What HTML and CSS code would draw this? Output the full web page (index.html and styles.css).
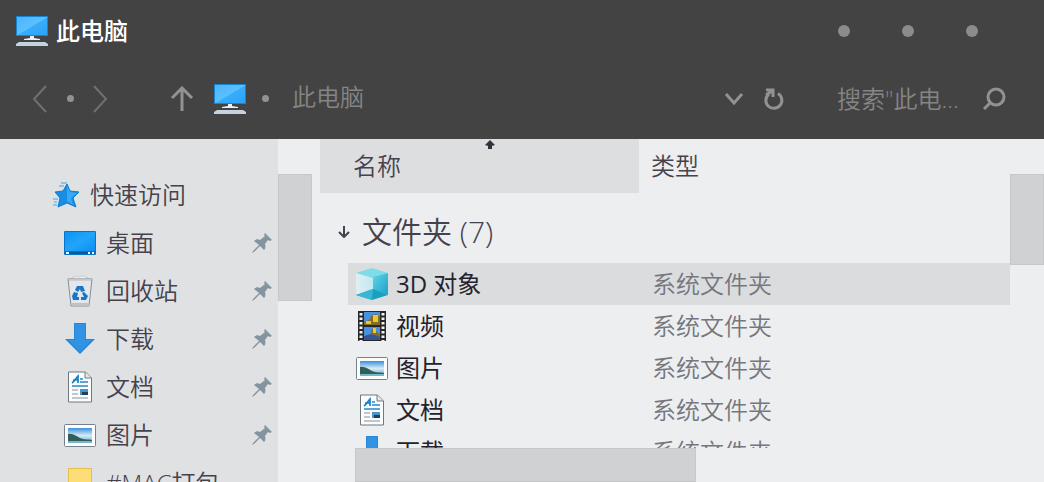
FILE: index.html
```html
<!DOCTYPE html>
<html lang="zh-CN">
<head>
<meta charset="utf-8">
<meta name="viewport" content="width=device-width, initial-scale=1">
<title>此电脑</title>
<link rel="stylesheet" href="styles.css">
</head>
<body>
<svg class="defs" aria-hidden="true">
  <defs>
    <linearGradient id="screen" x1="0" y1="0" x2="1" y2="1"><stop offset="0" stop-color="#4db4fa"/><stop offset=".5" stop-color="#5bc0ff"/><stop offset=".52" stop-color="#38adfb"/><stop offset="1" stop-color="#2ba3f8"/></linearGradient>
    <linearGradient id="desk" x1="0" y1="0" x2="1" y2="1"><stop offset="0" stop-color="#0b94f3"/><stop offset=".5" stop-color="#22a4fa"/><stop offset="1" stop-color="#0c8ff0"/></linearGradient>
    <linearGradient id="sky" x1="0" y1="0" x2="0" y2="1"><stop offset="0" stop-color="#3d8fdc"/><stop offset=".5" stop-color="#d5ecf6"/><stop offset="1" stop-color="#5aa7cf"/></linearGradient>
    <linearGradient id="glass" x1="0" y1="0" x2="1" y2="0"><stop offset="0" stop-color="#e2eef0"/><stop offset="1" stop-color="#bfe9f1"/></linearGradient>
    <linearGradient id="side" x1="0" y1="0" x2="1" y2="1"><stop offset="0" stop-color="#62d3e8"/><stop offset="1" stop-color="#1ba2c8"/></linearGradient>
    <symbol id="monitor" viewBox="0 0 32 32"><path d="M0 1h32v20H0z" fill="#1684d1"/><path d="M1 2h30v18H1z" fill="url(#screen)"/><path d="M14 21h4v2l6 1v1H8v-1l6-1z" fill="#e7f1f7"/><path d="M3 27h26l3 2v2H0v-2z" fill="#c4d3df"/></symbol>
    <symbol id="star" viewBox="0 0 28 28"><path d="M9 2h6M7 5h5M1 18h5M2 21h3M1 24h4" stroke="#70bcec" stroke-width="1.5"/><path d="M15 3l3 7 9 1-6 6 3 9-9-4-9 4 2-9-5-6 8-1z" fill="#178ee6" stroke="#1379cb"/><path d="M15 5l3 6 7 1-6 5 2 7-6-4z" fill="#39a8f5"/></symbol>
    <symbol id="desktop" viewBox="0 0 32 32"><rect y="4" width="32" height="24" rx="1" fill="#0874c7"/><path d="M1 5h30v19H1z" fill="url(#desk)"/><path d="M1 25h30v2H1z" fill="#075b9e"/><path d="M2 25h3v2H2zM24 25h2v2h-2zM28 25h2v2h-2z" fill="#fff"/></symbol>
    <symbol id="bin" viewBox="0 0 32 32"><path d="M8 3l4-2 3 1 4-1 5 2v3H7z" fill="#f3f5f6" stroke="#c5cbd0"/><path d="M4 4h24l-3 27H7z" fill="#e3e6ea" stroke="#8b8f94"/><path d="M7 28h18v3H8z" fill="#bfc3c7"/><path d="M4 4h24v1H4z" fill="#f7f8f9" stroke="#a3a7ab" stroke-width=".7"/><path d="M13 11h6l2 5-4 1-1-3-2 3-3-2zM10 17l4 1-1 4h2v3h-6l-1-4zM20 17l4 4-2 4h-5v-3h3l-2-4z" fill="#1676c9"/></symbol>
    <symbol id="download" viewBox="0 0 32 32"><path d="M10 0h12v16h9L16 31 1 16h9z" fill="#2587d8"/><path d="M11 1h10v16h7L16 29 4 17h7z" fill="#3093e4"/></symbol>
    <symbol id="document" viewBox="0 0 32 32"><path d="M4.500 1h17l6 6v24h-23z" fill="#fbfcfd" stroke="#6f7880"/><path d="M21 1v6h6" fill="#e5e8ea" stroke="#6f7880"/><path d="M8 12c2-1 4-5 6-7v7M9 9h5" fill="none" stroke="#147fc4" stroke-width="1.700"/><path d="M16 8h3M16 11h8M8 15h16" stroke="#2789ca" stroke-width="1.500"/><path d="M8 19h6M8 23h6M8 27h16" stroke="#859099" stroke-width="1.200"/><path d="M16 18h8v6h-8z" fill="#4d93bd"/><path d="M18 21h6v3h-6z" fill="#203f60"/></symbol>
    <symbol id="picture" viewBox="0 0 32 32"><rect x=".5" y="5.500" width="31" height="22" rx="1" fill="#fbfcfd" stroke="#78818a"/><path d="M4 9h24v15H4z" fill="url(#sky)"/><path d="M4 15c5-1 8 2 12 4s8 1 12 2v1H4z" fill="#315f58"/><path d="M4 22h24v2H4z" fill="#75b5d0"/></symbol>
    <symbol id="folder" viewBox="0 0 32 32"><path d="M4 1h24v31H4z" fill="#e6bd52"/><path d="M5 2h22v30H5z" fill="#fddd76"/></symbol>
    <symbol id="cube" viewBox="0 0 32 32"><path d="M0 5l17 4v13L0 27z" fill="url(#glass)"/><path d="M0 5L16 0l16 5-15 5z" fill="#7edbe8"/><path d="M17 9l15-4v22l-15-5z" fill="url(#side)"/><path d="M0 27l17-6 15 6-16 5z" fill="#189fc2"/><path d="M0 27l17-6-1 11z" fill="#38b6d3"/></symbol>
    <symbol id="film" viewBox="0 0 32 32"><path d="M2 1h28v30H2z" fill="#272727"/><path d="M8 2h16v13H8zM8 17h16v13H8z" fill="#4a91dd"/><path d="M8 12l5-2 3-5 4-1 4 3v8H8zM8 28l6-3 2-6 4 2 4 4v5H8z" fill="#806d2b"/><path d="M10 11h5v3h-5zM17 5h5v7h-5zM17 18h3v5h-3z" fill="#f0c52f"/><path d="M8 26l7-2 9 3v3H8z" fill="#355494"/><path d="M5 3v28M27 3v28" stroke="#f2f2f2" stroke-width="3" stroke-dasharray="2.500 2"/></symbol>
    <symbol id="pin" viewBox="0 0 20 20"><path d="M13 0l7 7-2 1-2-1-3 4c1 3 0 5-1 6l-4-4-6 6-2 1 1-2 6-6-5-4c2-2 4-2 6-1l5-4-1-1z" fill="#8495a0"/></symbol>
  </defs>
</svg>
<div class="window">
  <header class="chrome">
    <div class="titlebar">
      <svg class="icon"><use href="#monitor"/></svg>
      <h1 class="title">此电脑</h1>
      <div class="controls">
        <button class="dot" aria-label="最小化"></button>
        <button class="dot" aria-label="最大化"></button>
        <button class="dot" aria-label="关闭"></button>
      </div>
    </div>
    <nav class="toolbar" aria-label="导航">
      <div class="history">
        <button class="tool" aria-label="后退"><svg width="16" height="30" viewBox="0 0 16 30"><path d="M14 2L2 15l12 13" class="dim"/></svg></button>
        <span class="bullet"></span>
        <button class="tool" aria-label="前进"><svg width="16" height="30" viewBox="0 0 16 30"><path d="M2 2l12 13L2 28" class="dim"/></svg></button>
      </div>
      <button class="tool" aria-label="向上"><svg width="24" height="26" viewBox="0 0 24 26"><path d="M12 25V2M2 12L12 2l10 10" class="line"/></svg></button>
      <div class="address">
        <svg class="icon"><use href="#monitor"/></svg>
        <span class="bullet"></span>
        <span class="path">此电脑</span>
      </div>
      <div class="actions">
        <button class="tool" aria-label="展开"><svg width="20" height="14" viewBox="0 0 20 14"><path d="M2 2l8 9 8-9" class="line"/></svg></button>
        <button class="tool" aria-label="刷新"><svg width="20" height="24" viewBox="0 0 20 24"><path d="M14 6.500A8 8 0 1 1 5 7" class="line"/><path d="M2 3h7v7M8 4L2 8" class="line"/></svg></button>
      </div>
      <div class="search">
        <input class="query" type="text" aria-label="搜索" placeholder="搜索&quot;此电...">
        <button class="tool" aria-label="开始搜索"><svg width="24" height="24" viewBox="0 0 24 24"><circle cx="14" cy="10" r="8" class="line"/><path d="M8 16l-6 6" class="line"/></svg></button>
      </div>
    </nav>
  </header>
  <div class="content">
    <nav class="sidebar" aria-label="快速访问">
      <a class="quick" href="#"><svg class="star"><use href="#star"/></svg>快速访问</a>
      <a class="place" href="#"><svg class="icon"><use href="#desktop"/></svg><span class="label">桌面</span><svg class="pin"><use href="#pin"/></svg></a>
      <a class="place" href="#"><svg class="icon"><use href="#bin"/></svg><span class="label">回收站</span><svg class="pin"><use href="#pin"/></svg></a>
      <a class="place" href="#"><svg class="icon"><use href="#download"/></svg><span class="label">下载</span><svg class="pin"><use href="#pin"/></svg></a>
      <a class="place" href="#"><svg class="icon"><use href="#document"/></svg><span class="label">文档</span><svg class="pin"><use href="#pin"/></svg></a>
      <a class="place" href="#"><svg class="icon"><use href="#picture"/></svg><span class="label">图片</span><svg class="pin"><use href="#pin"/></svg></a>
      <a class="place" href="#"><svg class="icon"><use href="#folder"/></svg><span class="label">#MAC打包</span></a>
    </nav>
    <div class="side-track"><div class="thumb side-thumb"></div></div>
    <main class="files">
      <div class="columns">
        <button class="column sorted">名称<svg class="sort" viewBox="0 0 10 10"><path d="M5 0l5 5-3 1v3H3V6L0 5z"/></svg></button>
        <button class="column">类型</button>
      </div>
      <h2 class="group"><svg class="arrow" viewBox="0 0 12 12"><path d="M6 0v10M1 6l5 5 5-5"/></svg>文件夹 (7)</h2>
      <div class="listing">
        <table class="table">
          <colgroup><col class="name-col"><col></colgroup>
          <tbody>
            <tr class="selected"><td><div class="name"><svg class="icon"><use href="#cube"/></svg>3D 对象</div></td><td class="type">系统文件夹</td></tr>
            <tr><td><div class="name"><svg class="icon"><use href="#film"/></svg>视频</div></td><td class="type">系统文件夹</td></tr>
            <tr><td><div class="name"><svg class="icon"><use href="#picture"/></svg>图片</div></td><td class="type">系统文件夹</td></tr>
            <tr><td><div class="name"><svg class="icon"><use href="#document"/></svg>文档</div></td><td class="type">系统文件夹</td></tr>
            <tr><td><div class="name"><svg class="icon"><use href="#download"/></svg>下载</div></td><td class="type">系统文件夹</td></tr>
          </tbody>
        </table>
      </div>
      <div class="bottom-track"><div class="thumb bottom-thumb"></div></div>
    </main>
    <div class="main-track"><div class="thumb main-thumb"></div></div>
  </div>
</div>
</body>
</html>
```

FILE: styles.css
```css
* { box-sizing: border-box; }

body {
  margin: 0;
  font: 350 24px/32px "Open Sans", "Noto Sans CJK SC", sans-serif;
  color: #45424d;
}

button, input { font: inherit; color: inherit; border: 0; padding: 0; background: none; }
a { color: inherit; text-decoration: none; }
svg { display: block; flex: none; }
.defs { position: absolute; width: 0; height: 0; }
.icon { width: 32px; height: 32px; }

.window { display: flex; flex-direction: column; height: 100vh; overflow: hidden; background: #edeeef; }

.chrome { flex: none; background: #434344; }
.titlebar { display: flex; align-items: center; gap: 8px; height: 62px; padding: 0 66px 0 16px; }
.title { margin: 0; flex: 1; font-size: 24px; font-weight: 500; color: #fff; }
.controls { display: flex; gap: 52px; }
.dot { width: 12px; height: 12px; border-radius: 50%; background: #8c8c8b; }

.toolbar { display: flex; align-items: center; height: 77px; padding: 0 38px 4px 32px; color: #858585; }
.history { display: flex; align-items: center; justify-content: space-between; width: 76px; margin-right: 62px; }
.tool { display: flex; }
.bullet { width: 7px; height: 7px; border-radius: 50%; background: #929292; }
.dim, .line { fill: none; stroke: #707070; stroke-width: 2; }
.line { stroke: #929292; stroke-width: 3; }
.address { display: flex; flex: 1; align-items: center; gap: 16px; margin-left: 20px; }
.path { padding: 0 0 4px 7px; }
.actions { display: flex; align-items: center; gap: 20px; margin-right: 53px; }
.search { display: flex; align-items: center; gap: 16px; }
.query { width: 129px; height: 36px; }
.query::placeholder { color: #858585; opacity: 1; }

.content { display: flex; flex: 1; min-height: 0; }
.sidebar { flex: 0 0 278px; overflow: hidden; padding: 32px 6px 0 52px; background: #e0e1e3; }
.quick, .place { display: flex; align-items: center; height: 48px; white-space: nowrap; }
.quick { gap: 10px; }
.place { gap: 10px; padding-left: 12px; }
.star { width: 28px; height: 28px; }
.label { flex: 1; }
.pin { width: 20px; height: 20px; }

.side-track, .main-track { flex: 0 0 34px; padding-top: 35px; }
.thumb { background: #d0d1d3; border: 1px solid #c6c7c9; }
.side-thumb { height: 127px; }
.main-thumb { height: 91px; }

.files { display: flex; flex: 1; flex-direction: column; min-width: 0; padding-left: 8px; }
.columns { display: flex; flex: none; height: 54px; }
.column { position: relative; padding-left: 12px; text-align: left; }
.sorted { width: 319px; padding-left: 33px; background: #dddee0; }
.sort { position: absolute; top: 1px; left: 50%; width: 10px; height: 10px; margin-left: 5px; fill: #35323e; }
.group { display: flex; flex: none; align-items: center; gap: 12px; height: 70px; margin: 0; padding: 8px 0 0 18px; font-size: 30px; font-weight: 350; }
.arrow { width: 12px; height: 12px; fill: none; stroke: #45424d; stroke-width: 2; }
.listing { flex: 1; min-height: 0; overflow: hidden; padding-left: 28px; }
.table { width: 100%; border-spacing: 0; table-layout: fixed; }
.name-col { width: 304px; }
.table td { height: 42px; padding: 0; }
.selected { background: #dbdcde; }
.name { display: flex; align-items: center; gap: 8px; padding-left: 8px; color: #24222e; font-weight: 400; }
.type { color: #75767e; }
.bottom-track { flex: none; padding-left: 35px; }
.bottom-thumb { width: 341px; height: 34px; }
```
